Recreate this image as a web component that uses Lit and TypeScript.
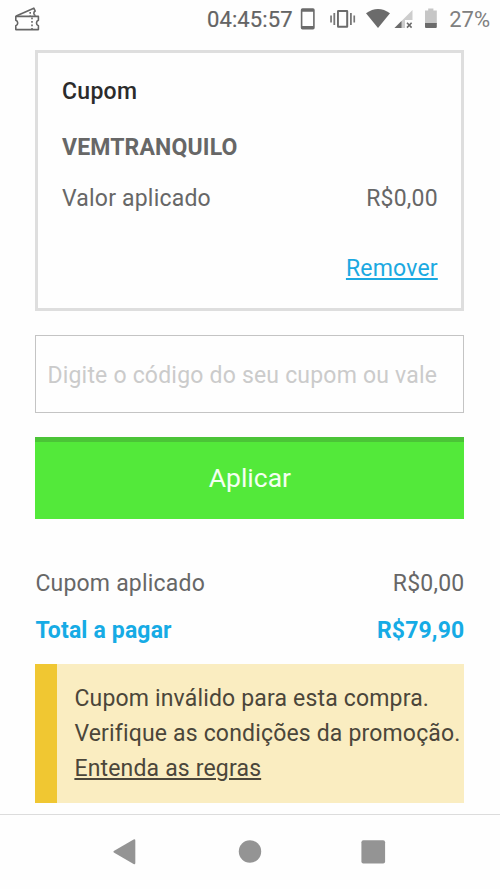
import { LitElement, html, css } from "lit";
import { customElement } from "lit/decorators.js";

@customElement("status-bar")
class StatusBar extends LitElement {
  static styles = css`
    :host { display: block; height: 50px; }
    .bar { display: flex; align-items: center; height: 39px; padding: 0 10px 0 14px; color: #646464; font-size: 22px; }
    .ticket { width: 28px; height: 29px; margin-right: auto; }
    .time { margin-right: 7px; letter-spacing: 0.1px; -webkit-text-stroke: 0.2px #646464; }
    .icons { width: 142px; height: 29px; }
    .pct { color: #808080; margin-left: 7.5px; }
    svg { display: block; flex: none; }
  `;
  render() {
    return html`<div class="bar">
      <svg class="ticket" viewBox="14 5 28 29" fill="none" stroke="#666" stroke-width="1.6" stroke-linejoin="round">
        <path d="M15.8 16.4H38.4V20.2A3 3 0 0 0 38.4 25.8V29.6H15.8V25.8A3 3 0 0 0 15.8 20.2Z" />
        <path d="M16.2 16L33.8 8.2L35.2 11.1A2.4 2.4 0 0 0 35.6 15.6" />
        <path d="M32 17.5V29M30.2 12V16" stroke-dasharray="1.8 1.7" />
      </svg>
      <span class="time">04:45:57</span>
      <svg class="icons" viewBox="300 5 142 29">
        <path fill="#6b6b6b" fill-rule="evenodd" d="M302.5 8.3H313a1.7 1.7 0 0 1 1.7 1.7V27.8a1.7 1.7 0 0 1-1.7 1.7H302.5a1.7 1.7 0 0 1-1.7-1.7V10a1.7 1.7 0 0 1 1.7-1.7ZM302.4 11.8V26H313.1V11.8Z" />
        <path fill="#6b6b6b" fill-rule="evenodd" d="M338.2 10H347a1.2 1.2 0 0 1 1.2 1.2V26.5a1.2 1.2 0 0 1-1.2 1.2H338.2a1.2 1.2 0 0 1-1.2-1.2V11.2a1.2 1.2 0 0 1 1.2-1.2ZM338.9 12V25.7H346.2V12Z" />
        <path fill="#777" d="M333.4 13h1.8v12h-1.8zM330.2 15.5h1.7v7h-1.7zM350 13h1.8v12H350zM353.4 15.5h1.7v7h-1.7z" />
        <path fill="#6b6b6b" d="M366 13.3Q378 4.8 390 13.3L378 28Z" />
        <path fill="#cdcdcd" d="M412.5 10V20H405V28H394.5Z" />
        <path fill="#6b6b6b" d="M401.5 21V28H394.5Z" />
        <path fill="none" stroke="#6b6b6b" stroke-width="1.6" d="M407 22.8L411.6 27.6M411.6 22.8L407 27.6" />
        <path fill="#c6c6c6" d="M428.2 8.5H433.4V10.4H436.8V24H425V10.4H428.2Z" />
        <path fill="#6b6b6b" d="M425 23H436.8V27a1 1 0 0 1-1 1H426a1 1 0 0 1-1-1Z" />
      </svg>
      <span class="pct">27%</span>
    </div>`;
  }
}

@customElement("nav-bar")
class NavBar extends LitElement {
  static styles = css`
    :host { display: block; }
    .nav { box-sizing: border-box; height: 75px; border-top: 1px solid #dcdcdc; display: flex; justify-content: space-between; align-items: center; padding: 0 114px 2px 112px; }
    svg { display: block; width: 25px; height: 27px; fill: #949494; }
  `;
  render() {
    return html`<div class="nav">
      <svg viewBox="112 838 25 27"><path d="M113.8 851Q113 851.7 113.8 852.4L133.6 864Q135.3 864.7 135.3 863V840.5Q135.3 838.6 133.6 839.5Z" /></svg>
      <svg viewBox="237 838 25 27"><circle cx="250" cy="851.5" r="11.2" /></svg>
      <svg viewBox="361 838 25 27"><rect x="361.4" y="840.2" width="23.7" height="23.4" rx="2" /></svg>
    </div>`;
  }
}

@customElement("app-root")
class AppRoot extends LitElement {
  static styles = css`
    :host { display: flex; flex-direction: column; height: 889px; background: #fefefe; overflow: hidden; font-family: Roboto, "Liberation Sans", sans-serif; font-size: 23px; line-height: 30px; color: #676767; }
    .page { flex: 1; width: 429px; margin-left: 35.4px; }
    .card { box-sizing: border-box; height: 261px; border: 3px solid #dedede; padding: 24px 23.6px 0; }
    .title { color: #2b2b2b; font-weight: 500; letter-spacing: 0.3px; }
    .code { font-weight: 700; margin-top: 25.5px; letter-spacing: 0.15px; }
    .row { display: flex; justify-content: space-between; letter-spacing: 0.2px; }
    .applied { margin-top: 21.5px; }
    .remove { margin-top: 40px; text-align: right; color: #1ba9e1; letter-spacing: 0.2px; }
    .link { text-decoration: underline; text-decoration-thickness: 2px; text-underline-offset: 2px; }
    .field { box-sizing: border-box; height: 78px; margin-top: 24px; border: 1px solid #c4c4c4; padding: 3px 11px 0; display: flex; align-items: center; color: #cbcbcb; white-space: nowrap; letter-spacing: 0.2px; }
    .apply { box-sizing: border-box; height: 82px; margin-top: 24px; border-top: 5px solid #4bc437; background: #53e93a; color: #f4fff1; font-size: 26.5px; display: flex; justify-content: center; align-items: center; padding-bottom: 6px; }
    .summary { margin-top: 49.5px; }
    .total { margin-top: 17px; color: #16abe5; font-weight: 700; letter-spacing: 0.15px; }
    .alert { box-sizing: border-box; height: 139px; margin-top: 18.5px; border-left: 22px solid #f0c732; background: #faedc1; color: #4b463a; padding: 17px 0 0 17px; line-height: 35px; white-space: nowrap; letter-spacing: 0.17px; }
  `;
  render() {
    return html`
      <status-bar></status-bar>
      <div class="page">
        <div class="card">
          <div class="title">Cupom</div>
          <div class="code">VEMTRANQUILO</div>
          <div class="row applied"><span>Valor aplicado</span><span>R$0,00</span></div>
          <div class="remove"><span class="link">Remover</span></div>
        </div>
        <div class="field">Digite o código do seu cupom ou vale</div>
        <div class="apply">Aplicar</div>
        <div class="row summary"><span>Cupom aplicado</span><span>R$0,00</span></div>
        <div class="row total"><span>Total a pagar</span><span>R$79,90</span></div>
        <div class="alert">
          <div>Cupom inválido para esta compra.</div>
          <div>Verifique as condições da promoção.</div>
          <div><span class="link">Entenda as regras</span></div>
        </div>
      </div>
      <nav-bar></nav-bar>
    `;
  }
}
